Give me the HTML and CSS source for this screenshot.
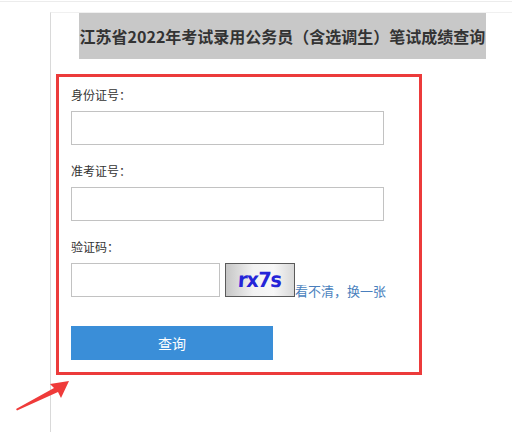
FILE: index.html
```html
<!DOCTYPE html>
<html lang="zh-CN">
<head>
<meta charset="utf-8">
<title>笔试成绩查询</title>
<link rel="stylesheet" href="styles.css">
</head>
<body>
<div class="topline"></div>
<div class="panel">
  <h1 class="title">江苏省2022年考试录用公务员（含选调生）笔试成绩查询</h1>
  <form class="form">
    <div class="field">
      <label class="label">身份证号：</label>
      <input class="input" type="text">
    </div>
    <div class="field">
      <label class="label">准考证号：</label>
      <input class="input" type="text">
    </div>
    <div class="field">
      <label class="label">验证码：</label>
      <div class="captcha-row">
        <input class="input input-short" type="text">
        <span class="captcha"><span class="captcha-text">rx7s</span></span>
        <a class="refresh" href="#">看不清，换一张</a>
      </div>
    </div>
    <button class="submit" type="button">查询</button>
  </form>
</div>
<svg class="arrow" width="80" height="60" viewBox="0 0 80 60">
  <polygon points="16,49 54,28 50,24 69,21 61,38 58,32 17,50.5" fill="#ef3b3a"/>
</svg>
</body>
</html>
```

FILE: styles.css
```css
html, body {
  margin: 0;
  padding: 0;
  background: #fff;
  font-family: "Noto Sans CJK SC", "Noto Sans", sans-serif;
  color: #333;
}
body {
  position: relative;
  width: 512px;
  height: 432px;
  overflow: hidden;
}
.topline {
  margin-top: 1px;
  height: 1px;
  background: #ececec;
}
.panel {
  margin-top: 10px;
  margin-left: 50px;
  border-left: 1px solid #d9d9d9;
  border-top: 1px solid #f0f0f0;
  height: 430px;
  padding-left: 28px;
}
.title {
  margin: 0;
  width: 407px;
  height: 46px;
  background: #c8c8c8;
  font-size: 16px;
  font-weight: bold;
  line-height: 46px;
  text-align: center;
  white-space: nowrap;
  color: #333;
}
.form {
  box-sizing: border-box;
  margin: 15px 0 0 -23px;
  width: 366px;
  height: 301px;
  border: 3px solid #ec3b3b;
  padding: 8px 0 0 12px;
}
.field {
  margin-bottom: 16px;
}
.field:last-of-type {
  margin-bottom: 0;
}
.label {
  display: block;
  font-size: 12px;
  line-height: 20px;
  height: 20px;
  margin-bottom: 6px;
  color: #333;
}
.input {
  display: block;
  box-sizing: border-box;
  width: 313px;
  height: 34px;
  border: 1px solid #c2c2c2;
  margin: 0;
  padding: 0 6px;
  background: #fff;
  outline: none;
}
.captcha-row {
  display: flex;
  align-items: flex-end;
  height: 34px;
}
.input-short {
  width: 149px;
}
.captcha {
  box-sizing: border-box;
  display: flex;
  align-items: center;
  justify-content: center;
  margin-left: 5px;
  width: 70px;
  height: 34px;
  border: 1px solid #5a5a5a;
  background: linear-gradient(90deg, #c6c6c6 0%, #f2f2f2 40%, #f7f7f7 70%, #d8d8d8 100%);
}
.captcha-text {
  font-family: "DejaVu Sans", sans-serif;
  font-weight: bold;
  font-size: 21px;
  line-height: 24px;
  letter-spacing: -1px;
  color: #2424d8;
  transform: scaleX(0.92) skewX(-4deg);
}
.refresh {
  font-size: 13px;
  line-height: 17px;
  color: #4a7fbd;
  text-decoration: none;
  white-space: nowrap;
  margin-bottom: -2px;
}
.submit {
  display: block;
  margin-top: 29px;
  width: 202px;
  height: 34px;
  border: 0;
  background: #3a8ed8;
  color: #fff;
  font-family: "Noto Sans CJK SC", sans-serif;
  font-size: 14px;
  padding: 0;
  cursor: pointer;
}
.arrow {
  position: absolute;
  left: 0;
  top: 360px;
}
```
